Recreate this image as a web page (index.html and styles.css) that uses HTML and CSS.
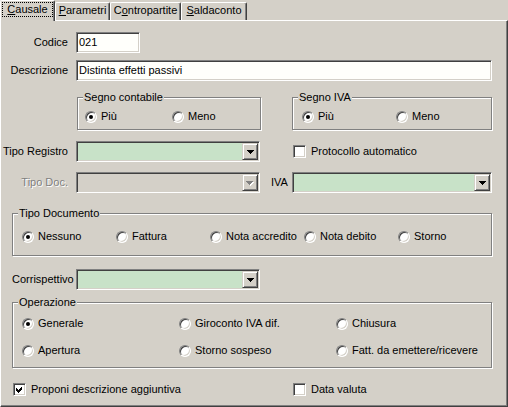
FILE: index.html
```html
<!DOCTYPE html>
<html>
<head>
<meta charset="utf-8">
<link rel="stylesheet" href="styles.css">
</head>
<body>
<div class="window">
  <div class="tabs">
    <div class="tab active w-causale"><span class="focus"><u>C</u>ausale</span></div>
    <div class="tab w-param"><u>P</u>arametri</div>
    <div class="tab w-contro">C<u>o</u>ntropartite</div>
    <div class="tab w-saldo"><u>S</u>aldaconto</div>
  </div>
  <div class="panel">
    <div class="row r-codice">
      <span class="lbl">Codice</span>
      <div class="field f-codice">021</div>
    </div>
    <div class="row r-desc">
      <span class="lbl">Descrizione</span>
      <div class="field f-desc">Distinta effetti passivi</div>
    </div>
    <div class="row r-segno">
      <div class="group g-contabile">
        <span class="legend">Segno contabile</span>
        <div class="radios">
          <div class="opt o-segno1"><span class="radio on"></span><span>Più</span></div>
          <div class="opt"><span class="radio"></span><span>Meno</span></div>
        </div>
      </div>
      <div class="group g-iva">
        <span class="legend">Segno IVA</span>
        <div class="radios">
          <div class="opt o-segno2"><span class="radio on"></span><span>Più</span></div>
          <div class="opt"><span class="radio"></span><span>Meno</span></div>
        </div>
      </div>
    </div>
    <div class="row r-registro">
      <span class="lbl">Tipo Registro</span>
      <div class="combo c-short">
        <div class="value"></div>
        <div class="btn"><svg width="7" height="4" viewBox="0 0 7 4"><polygon points="0,0 7,0 3.5,4" fill="#000"/></svg></div>
      </div>
      <div class="check-opt ck-proto"><span class="check"></span><span>Protocollo automatico</span></div>
    </div>
    <div class="row r-tipodoc">
      <span class="lbl disabled">Tipo Doc.</span>
      <div class="combo c-short off">
        <div class="value"></div>
        <div class="btn"><svg width="8" height="5" viewBox="0 0 8 5"><polygon points="1,1 8,1 4.5,5" fill="#fff"/><polygon points="0,0 7,0 3.5,4" fill="#808080"/></svg></div>
      </div>
      <span class="lbl-iva">IVA</span>
      <div class="combo c-iva">
        <div class="value"></div>
        <div class="btn"><svg width="7" height="4" viewBox="0 0 7 4"><polygon points="0,0 7,0 3.5,4" fill="#000"/></svg></div>
      </div>
    </div>
    <div class="group g-tipodoc">
      <span class="legend">Tipo Documento</span>
      <div class="radios">
        <div class="opt o-doc"><span class="radio on"></span><span>Nessuno</span></div>
        <div class="opt o-doc"><span class="radio"></span><span>Fattura</span></div>
        <div class="opt o-doc"><span class="radio"></span><span>Nota accredito</span></div>
        <div class="opt o-doc"><span class="radio"></span><span>Nota debito</span></div>
        <div class="opt"><span class="radio"></span><span>Storno</span></div>
      </div>
    </div>
    <div class="row r-corr">
      <span class="lbl-corr">Corrispettivo</span>
      <div class="combo c-short">
        <div class="value"></div>
        <div class="btn"><svg width="7" height="4" viewBox="0 0 7 4"><polygon points="0,0 7,0 3.5,4" fill="#000"/></svg></div>
      </div>
    </div>
    <div class="group g-oper">
      <span class="legend">Operazione</span>
      <div class="oper-grid">
        <div class="opt"><span class="radio on"></span><span>Generale</span></div>
        <div class="opt"><span class="radio"></span><span>Giroconto IVA dif.</span></div>
        <div class="opt"><span class="radio"></span><span>Chiusura</span></div>
        <div class="opt"><span class="radio"></span><span>Apertura</span></div>
        <div class="opt"><span class="radio"></span><span>Storno sospeso</span></div>
        <div class="opt"><span class="radio"></span><span>Fatt. da emettere/ricevere</span></div>
      </div>
    </div>
    <div class="row r-bottom">
      <div class="check-opt ck-proponi"><span class="check on"><svg width="11" height="11" viewBox="0 0 11 11"><path d="M2 4 L4 6 L8 2 L8 5 L4 9 L2 7 Z" fill="#000"/></svg></span><span>Proponi descrizione aggiuntiva</span></div>
      <div class="check-opt"><span class="check"></span><span>Data valuta</span></div>
    </div>
  </div>
</div>
</body>
</html>
```

FILE: styles.css
```css
* { box-sizing: border-box; }
html, body { margin: 0; padding: 0; }
body {
  background: #d4d0c8;
  font-family: "Liberation Sans", Arial, sans-serif;
  font-size: 11px;
  line-height: 13px;
  color: #000;
}
.window { width: 508px; height: 407px; }

/* tabs */
.tabs { display: flex; align-items: flex-end; height: 20px; }
.tab {
  height: 18px;
  border-top: 1px solid #fff;
  border-left: 1px solid #fff;
  border-right: 1px solid #404040;
  border-top-left-radius: 2px;
  border-top-right-radius: 2px;
  box-shadow: inset -1px 0 #808080;
  background: #d4d0c8;
  text-align: center;
  padding-top: 1px;
  white-space: nowrap;
}
.tab u { text-decoration: underline; text-underline-offset: 1px; }
.tab.active {
  height: 21px;
  margin-bottom: -1px;
  position: relative;
  z-index: 1;
  padding-top: 1px;
}
.focus { display: inline-block; border: 1px dotted #000; padding: 0 4px; }
.w-causale { width: 55px; }
.w-param { width: 55px; }
.w-contro { width: 71px; }
.w-saldo { width: 66px; }

/* panel */
.panel {
  width: 508px;
  height: 387px;
  border-top: 1px solid #fff;
  border-left: 1px solid #fff;
  border-right: 1px solid #404040;
  border-bottom: 1px solid #404040;
  box-shadow: inset -1px -1px #808080;
  display: flex;
  flex-direction: column;
}

.row { display: flex; align-items: center; }
.lbl { width: 67px; text-align: right; margin-right: 8px; white-space: nowrap; }
.lbl.disabled { color: #808080; text-shadow: 1px 1px #fff; }

.field {
  height: 21px;
  background: #fffffb;
  border: 1px solid;
  border-color: #808080 #fff #fff #808080;
  box-shadow: inset 1px 1px #404040, inset -1px -1px #d4d0c8;
  padding: 3px 2px 0;
  white-space: nowrap;
}
.r-codice { margin-top: 11px; }
.f-codice { width: 64px; }
.r-desc { margin-top: 7px; }
.f-desc { width: 416px; }

/* group boxes */
.group {
  position: relative;
  border: 1px solid #808080;
  box-shadow: inset 1px 1px #fff, 1px 1px 0 #fff;
}
.legend {
  position: absolute;
  top: -7px;
  left: 5px;
  padding: 0 1px;
  background: #d4d0c8;
  white-space: nowrap;
}
.radios { display: flex; height: 13px; }
.opt { display: flex; align-items: center; gap: 4px; white-space: nowrap; height: 13px; }
.radio {
  position: relative;
  width: 12px;
  height: 12px;
  flex: none;
  border-radius: 50%;
  background: #fff;
  border: 1px solid;
  border-color: #808080 #fff #fff #808080;
  box-shadow: inset 1px 1px #404040, inset -1px -1px #d4d0c8;
}
.radio.on::after {
  content: "";
  position: absolute;
  left: 3px;
  top: 3px;
  width: 4px;
  height: 4px;
  border-radius: 50%;
  background: #000;
}

.r-segno { margin-top: 16px; align-items: flex-start; }
.g-contabile { margin-left: 76px; width: 184px; height: 33px; padding: 12px 0 0 7px; }
.g-iva { margin-left: 31px; width: 200px; height: 33px; padding: 12px 0 0 9px; }
.o-segno1 { width: 87px; }
.o-segno2 { width: 94px; }

/* combos */
.combo {
  display: flex;
  height: 21px;
  padding: 1px;
  background: #c8e2c8;
  border: 1px solid;
  border-color: #808080 #fff #fff #808080;
  box-shadow: inset 1px 1px #404040, inset -1px -1px #d4d0c8;
}
.combo.off { background: #d4d0c8; }
.combo .value { flex: 1; }
.btn {
  width: 16px;
  height: 17px;
  background: #d4d0c8;
  border: 1px solid;
  border-color: #d4d0c8 #404040 #404040 #d4d0c8;
  box-shadow: inset 1px 1px #fff, inset -1px -1px #808080;
  display: flex;
  align-items: center;
  justify-content: center;
  padding-top: 1px;
}
.btn svg { display: block; shape-rendering: crispEdges; }
.c-short { width: 184px; }
.c-iva { width: 200px; }

.r-registro { margin-top: 11px; }
.check-opt { display: flex; align-items: center; gap: 5px; white-space: nowrap; }
.ck-proto { margin-left: 33px; }
.check {
  width: 13px;
  height: 13px;
  flex: none;
  background: #fff;
  border: 1px solid;
  border-color: #808080 #fff #fff #808080;
  box-shadow: inset 1px 1px #404040, inset -1px -1px #d4d0c8;
}
.check svg { display: block; shape-rendering: crispEdges; }

.r-tipodoc { margin-top: 10px; }
.lbl-iva { margin-left: 11px; width: 21px; }

.g-tipodoc { margin-top: 20px; margin-left: 11px; width: 480px; height: 43px; padding: 16px 0 0 9px; }
.o-doc { width: 94px; }

.r-corr { margin-top: 13px; }
.lbl-corr { width: 75px; padding-left: 11px; white-space: nowrap; }

.g-oper { margin-top: 12px; margin-left: 11px; width: 480px; height: 66px; padding: 14px 0 0 9px; }
.oper-grid { display: grid; grid-template-columns: 157px 157px auto; row-gap: 14px; }

.r-bottom { margin-top: 15px; }
.ck-proponi { margin-left: 12px; width: 280px; }
```
